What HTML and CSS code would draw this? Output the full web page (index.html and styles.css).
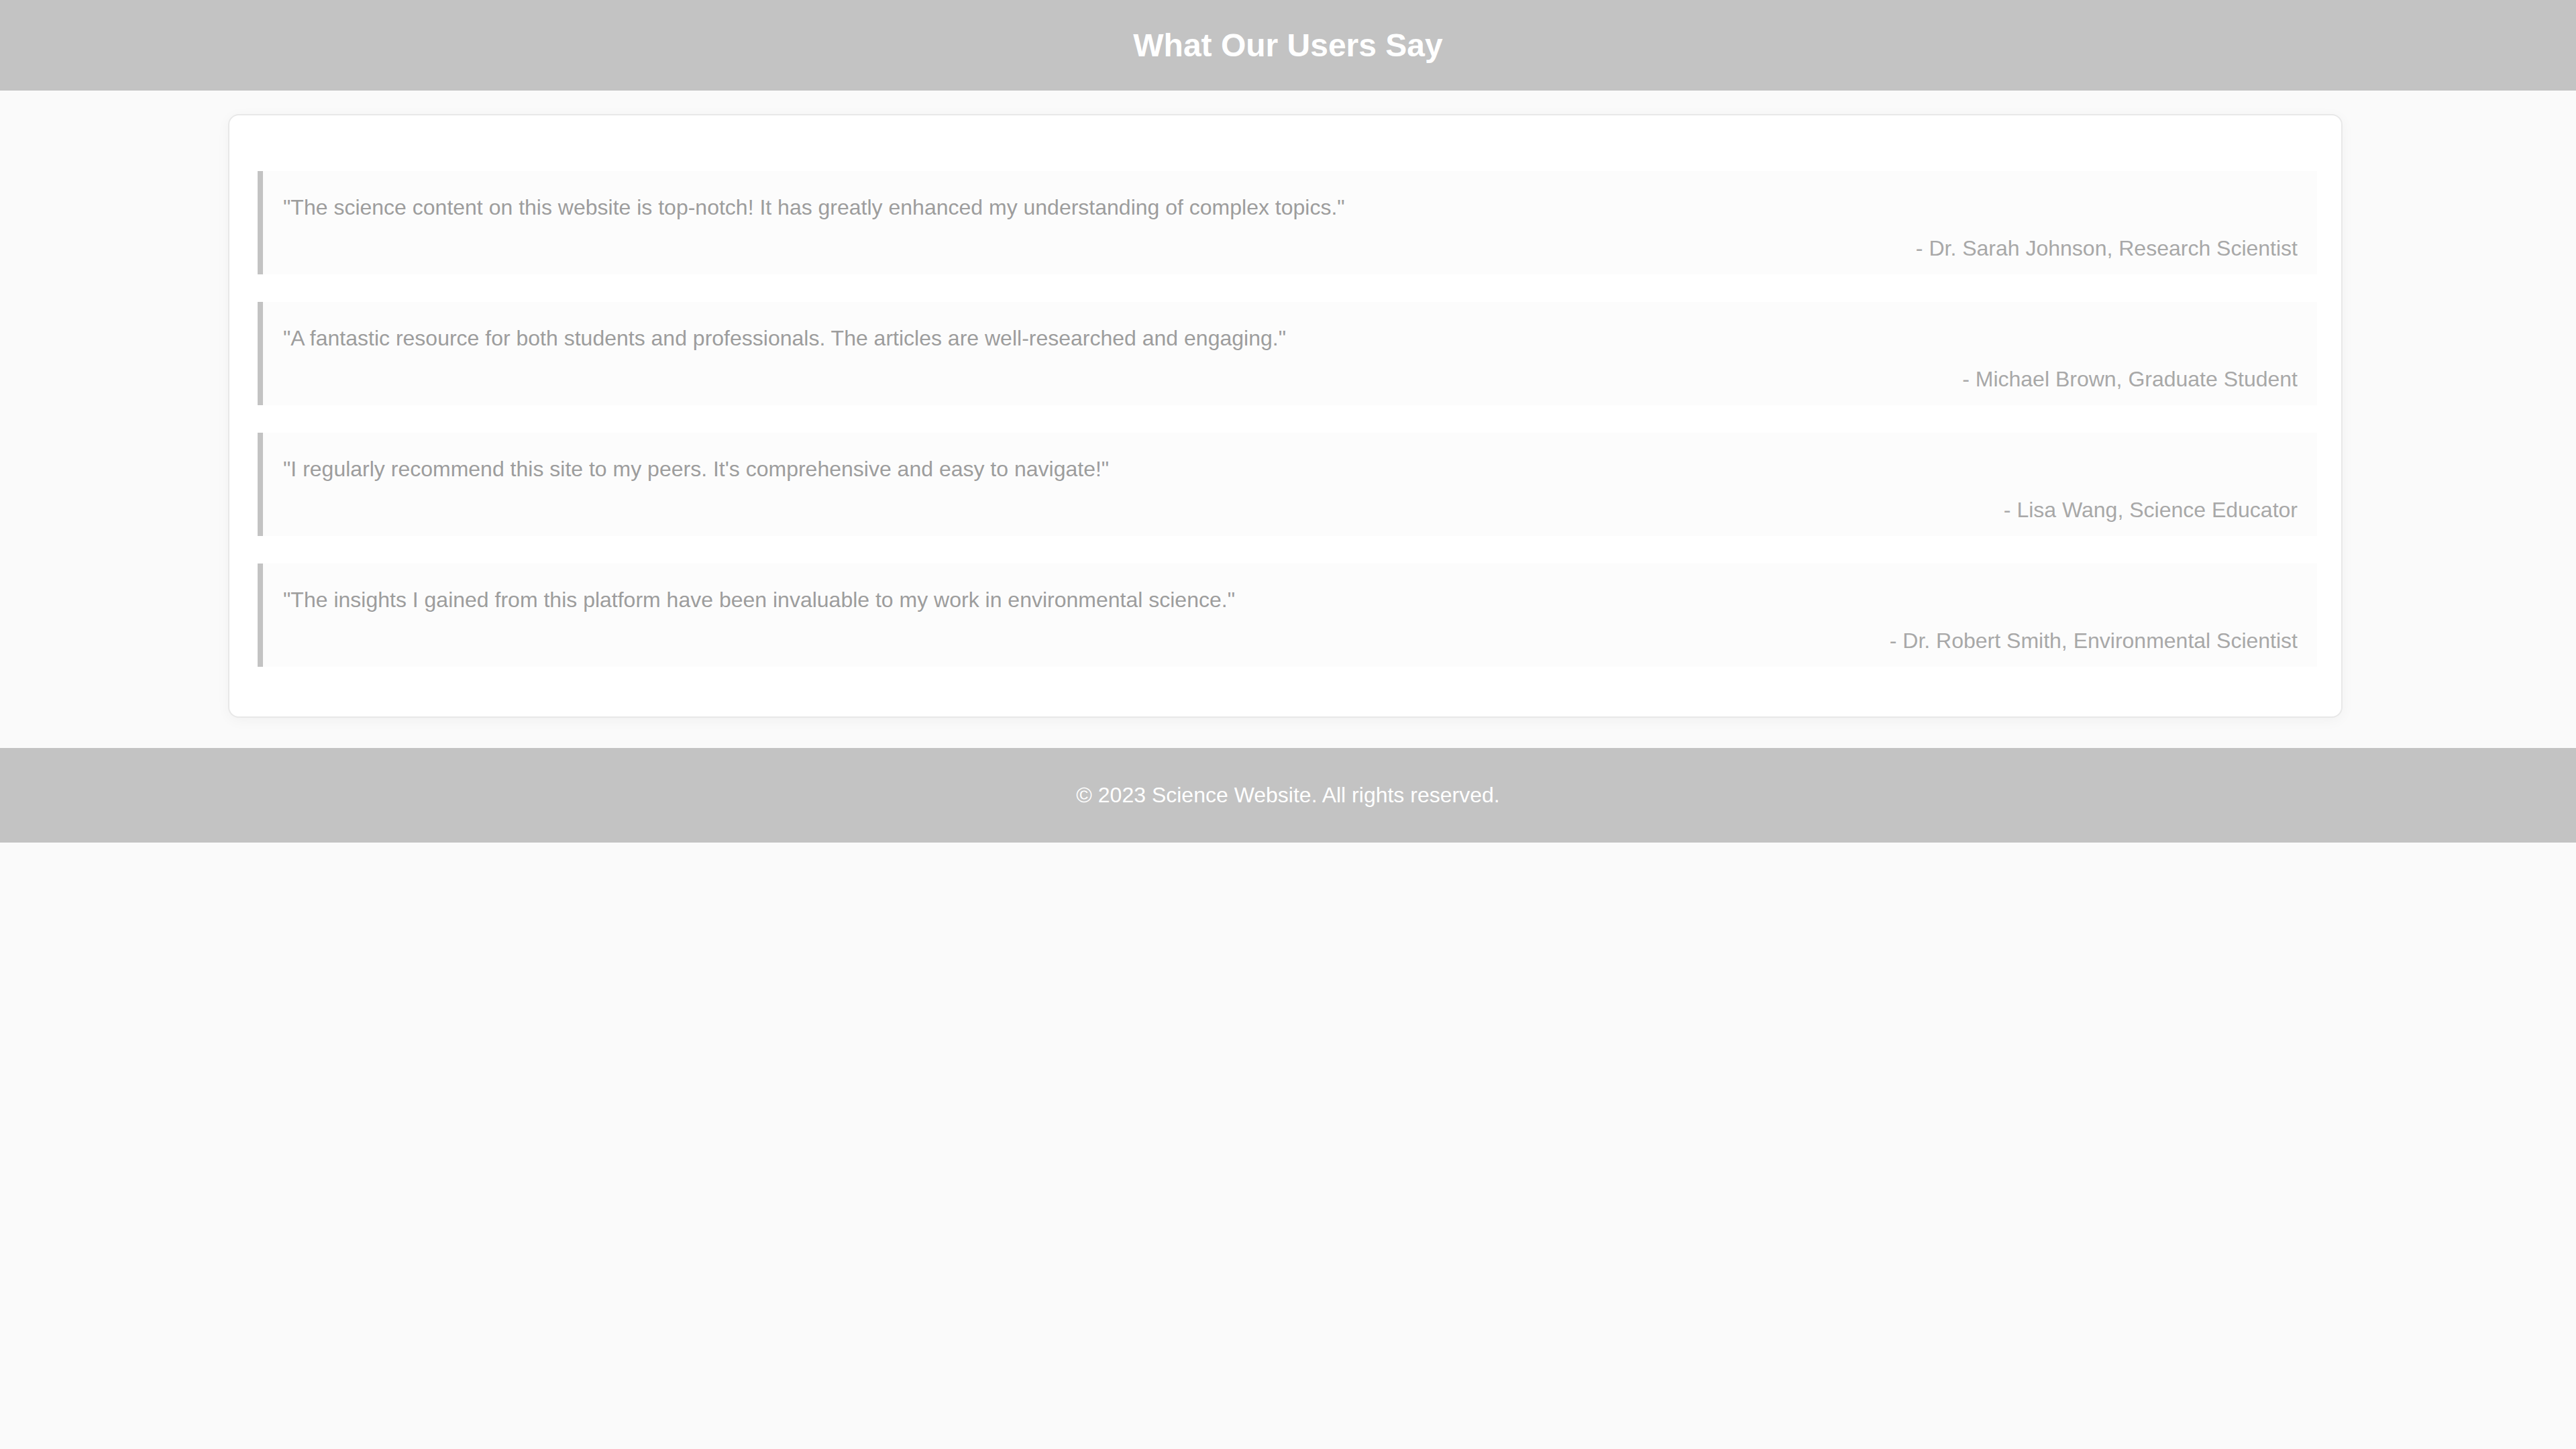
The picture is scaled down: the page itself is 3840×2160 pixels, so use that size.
FILE: index.html
```html
<!DOCTYPE html>
<html lang="en">
<head>
<meta charset="utf-8">
<title>What Our Users Say</title>
<link rel="stylesheet" href="styles.css">
</head>
<body>
<header class="site-header">
  <h1 class="site-title">What Our Users Say</h1>
</header>
<main class="main">
  <section class="card">
    <blockquote class="testimonial">
      <p class="quote">"The science content on this website is top-notch! It has greatly enhanced my understanding of complex topics."</p>
      <p class="author">- Dr. Sarah Johnson, Research Scientist</p>
    </blockquote>
    <blockquote class="testimonial">
      <p class="quote">"A fantastic resource for both students and professionals. The articles are well-researched and engaging."</p>
      <p class="author">- Michael Brown, Graduate Student</p>
    </blockquote>
    <blockquote class="testimonial">
      <p class="quote">"I regularly recommend this site to my peers. It's comprehensive and easy to navigate!"</p>
      <p class="author">- Lisa Wang, Science Educator</p>
    </blockquote>
    <blockquote class="testimonial">
      <p class="quote">"The insights I gained from this platform have been invaluable to my work in environmental science."</p>
      <p class="author">- Dr. Robert Smith, Environmental Scientist</p>
    </blockquote>
  </section>
</main>
<footer class="site-footer">
  <p class="footer-text">© 2023 Science Website. All rights reserved.</p>
</footer>
</body>
</html>
```

FILE: styles.css
```css
* {
  box-sizing: border-box;
}

html {
  background: #fafafa;
}

body {
  margin: 0;
  font-family: "Liberation Sans", Arial, Helvetica, sans-serif;
  background: #fafafa;
  color: #9b9b9b;
}

.site-header {
  height: 135px;
  background: #c3c3c3;
  display: flex;
  align-items: center;
  justify-content: center;
}

.site-title {
  margin: 0;
  font-size: 48px;
  font-weight: bold;
  color: #ffffff;
  line-height: 1.15;
}

.main {
  padding: 35px 8px 45px 0;
}

.card {
  width: 3152px;
  margin: 0 auto;
  background: #ffffff;
  border: 2px solid #e8e8e8;
  border-radius: 16px;
  box-shadow: 0 4px 20px rgba(0, 0, 0, 0.04);
  padding: 83px 36px 74px 42px;
  display: flex;
  flex-direction: column;
  gap: 41px;
}

.testimonial {
  margin: 0;
  height: 154px;
  background: #fcfcfc;
  border-left: 8px solid #c3c3c3;
  padding: 36px 29px 20px 30px;
}

.quote {
  margin: 0 0 24px;
  font-size: 32px;
  line-height: 1.15;
  color: #9d9d9d;
}

.author {
  margin: 0;
  font-size: 32px;
  line-height: 1.15;
  text-align: right;
  color: #a8a8a8;
}

.site-footer {
  height: 141px;
  background: #c3c3c3;
  display: flex;
  align-items: center;
  justify-content: center;
}

.footer-text {
  margin: 0;
  font-size: 32px;
  color: #ffffff;
}
```
